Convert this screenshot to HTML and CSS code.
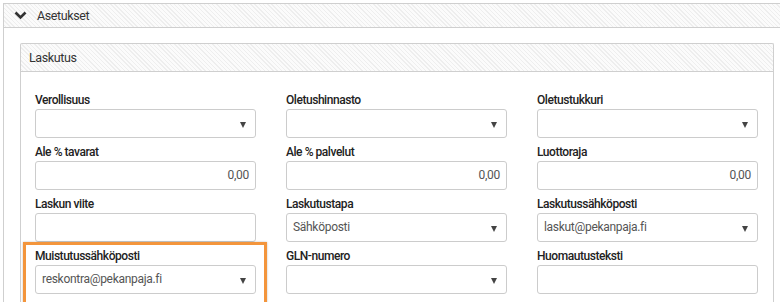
FILE: index.html
```html
<!DOCTYPE html>
<html lang="fi">
<head>
  <meta charset="UTF-8" />
  <title>Asetukset</title>
  <link rel="stylesheet" href="styles.css">
</head>
<body>

  <div class="section">
    <div class="section-head">
      <svg class="chevron" width="13" height="9" viewBox="0 0 13 9">
        <path d="M1.5 1.5 L6.5 6.5 L11.5 1.5" fill="none" stroke="#333" stroke-width="2.6" />
      </svg>
      <span>Asetukset</span>
    </div>

    <div class="section-body">
      <div class="panel">
        <div class="panel-head">Laskutus</div>
        <div class="panel-body">

          <div class="field">
            <label>Verollisuus</label>
            <div class="input select"></div>
          </div>
          <div class="field">
            <label>Oletushinnasto</label>
            <div class="input select"></div>
          </div>
          <div class="field">
            <label>Oletustukkuri</label>
            <div class="input select"></div>
          </div>

          <div class="field">
            <label>Ale % tavarat</label>
            <div class="input number">0,00</div>
          </div>
          <div class="field">
            <label>Ale % palvelut</label>
            <div class="input number">0,00</div>
          </div>
          <div class="field">
            <label>Luottoraja</label>
            <div class="input number">0,00</div>
          </div>

          <div class="field">
            <label>Laskun viite</label>
            <div class="input"></div>
          </div>
          <div class="field">
            <label>Laskutustapa</label>
            <div class="input select">Sähköposti</div>
          </div>
          <div class="field">
            <label>Laskutussähköposti</label>
            <div class="input select">laskut@pekanpaja.fi</div>
          </div>

          <div class="field highlighted">
            <label>Muistutussähköposti</label>
            <div class="input select">reskontra@pekanpaja.fi</div>
          </div>
          <div class="field">
            <label>GLN-numero</label>
            <div class="input select"></div>
          </div>
          <div class="field">
            <label>Huomautusteksti</label>
            <div class="input"></div>
          </div>

        </div>
      </div>
    </div>
  </div>

</body>
</html>
```

FILE: styles.css
```css
* {
  box-sizing: border-box;
}

body {
  margin: 0;
  padding: 3px;
  overflow: hidden;
  background: #fff;
  font-family: Roboto, "Liberation Sans", sans-serif;
  font-size: 12px;
  color: #333;
}

.section {
  width: 788px;
  border: 1px solid #cfcfcf;
  border-bottom: none;
}

.section-head,
.panel-head {
  display: flex;
  align-items: center;
  background-color: #f6f6f6;
  background-image: repeating-linear-gradient(45deg, #fbfbfb 0 1px, #eeeeee 1px 2px, #fbfbfb 2px 3px);
  border-bottom: 1px solid #cfcfcf;
  font-size: 12.5px;
  letter-spacing: -0.4px;
}

.section-head {
  height: 24px;
  padding-left: 10px;
  gap: 10px;
}

.chevron {
  display: block;
}

.section-body {
  padding: 15px 16px 0 16px;
}

.panel {
  width: 754px;
  border: 1px solid #cfcfcf;
  border-bottom: none;
  border-radius: 2px 2px 0 0;
}

.panel-head {
  height: 28px;
  padding-left: 8px;
}

.panel-body {
  display: grid;
  grid-template-columns: repeat(3, 1fr);
  column-gap: 30px;
  row-gap: 6px;
  padding: 20px 15px 20px 14px;
}

.field {
  position: relative;
}

.field label {
  display: block;
  height: 16px;
  line-height: 16px;
  margin-bottom: 1px;
  font-weight: 500;
  color: #222;
  letter-spacing: -0.45px;
}

.input {
  position: relative;
  height: 29px;
  line-height: 27px;
  border: 1px solid #cccccc;
  border-radius: 3px;
  padding: 0 6px;
  color: #555;
  letter-spacing: -0.3px;
  background: #fff;
}

.select {
  padding-left: 6px;
}

.select::after {
  content: "";
  position: absolute;
  right: 9px;
  top: 12px;
  border-left: 3.5px solid transparent;
  border-right: 3.5px solid transparent;
  border-top: 6px solid #444;
}

.number {
  text-align: right;
}

.highlighted::before {
  content: "";
  position: absolute;
  left: -12px;
  top: -6px;
  right: -11px;
  bottom: -16px;
  border: 3px solid #f3953c;
  box-shadow: 0 0 2px rgba(0, 0, 0, 0.25);
}
```
